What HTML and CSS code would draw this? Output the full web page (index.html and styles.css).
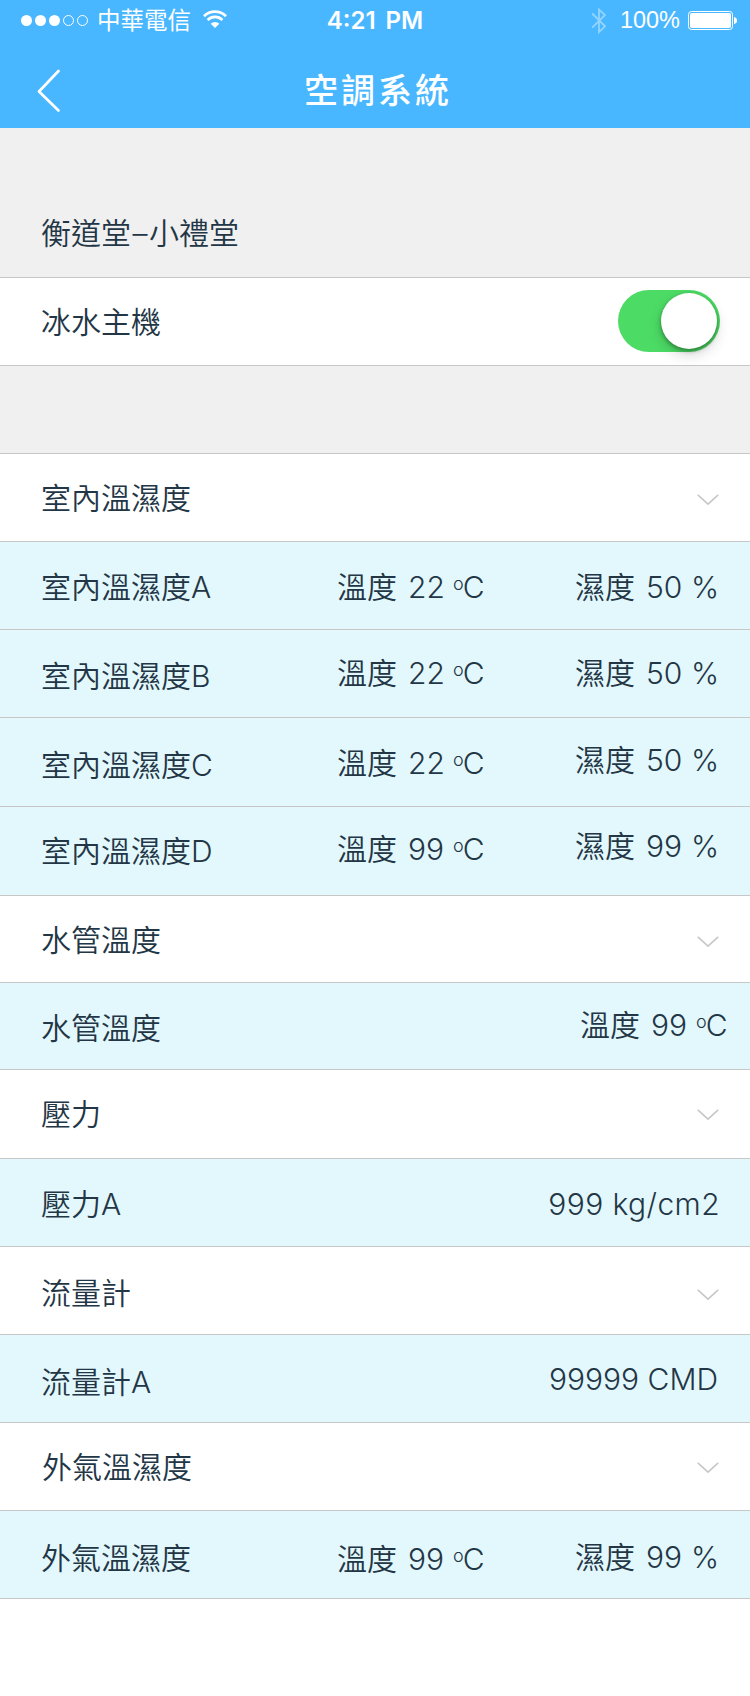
FILE: index.html
```html
<!DOCTYPE html>
<html lang="zh-Hant">
<head>
<meta charset="utf-8">
<title>空調系統</title>
<link rel="stylesheet" href="styles.css">
</head>
<body>
<svg width="0" height="0" class="defs"><symbol id="chev" viewBox="0 0 22 12"><path d="M.8 .8L11 10.2L21.2 .8" fill="none" stroke="#c7c7c7" stroke-width="1.6"/></symbol></svg>
<header class="top">
  <div class="status">
    <div class="carrier">
      <svg width="69" height="13" viewBox="0 0 69 13" fill="#fff"><circle cx="6.5" cy="6.5" r="5.5"/><circle cx="20.5" cy="6.5" r="5.5"/><circle cx="34.5" cy="6.5" r="5.5"/><g fill="none" stroke="#fff"><circle cx="48.5" cy="6.5" r="5"/><circle cx="62.5" cy="6.5" r="5"/></g></svg>
      <span class="carrier-name">中華電信</span>
      <svg class="wifi" width="24" height="19" viewBox="0 0 24 19"><path d="M1 6.2A15.6 15.6 0 0 1 23 6.2M4.6 10A10.5 10.5 0 0 1 19.4 10" fill="none" stroke="#fff" stroke-width="2.7"/><path d="M12 18L7.7 13.7A6.1 6.1 0 0 1 16.3 13.7Z" fill="#fff"/></svg>
    </div>
    <div class="clock">4:21 PM</div>
    <div class="power">
      <svg class="bt" width="16" height="28" viewBox="0 0 16 28"><path d="M1.2 6.5L14 19.3L8 25.2V2.5L14 8L1.2 20.7" fill="none" stroke="#fff" stroke-width="1.8"/></svg>
      <span class="percent">100%</span>
      <svg width="50" height="20" viewBox="0 0 50 20"><rect x=".5" y=".5" width="44" height="18" rx="3" fill="none" stroke="#fff"/><rect x="2" y="2" width="41" height="15" rx="1.8" fill="#fff"/><path d="M46 6Q49 6.5 49 9.5T46 13Z" fill="#fff"/></svg>
    </div>
  </div>
  <nav class="nav">
    <svg class="back" width="24" height="44" viewBox="0 0 24 44"><path d="M21.5 2L2 22.5L21.5 41.5" fill="none" stroke="#fff" stroke-width="2.7" stroke-linecap="round" stroke-linejoin="round"/></svg>
    <h1 class="title">空調系統</h1>
  </nav>
</header>
<main class="list">
  <div class="row place"><span class="label">衡道堂<span class="dash">–</span>小禮堂</span></div>
  <div class="row head"><span class="label">冰水主機</span><span class="switch"><span class="knob"></span></span></div>
  <div class="row gap"></div>
  <div class="row head"><span class="label">室內溫濕度</span><svg class="chev"><use href="#chev"/></svg></div>
  <div class="row data"><span class="label d1">室內溫濕度A</span><span class="temp d1">溫度<span class="n">22</span><i class="o">o</i>C</span><span class="hum d1">濕度<span class="n">50</span><span class="pc">%</span></span></div>
  <div class="row data"><span class="label d2">室內溫濕度B</span><span class="temp u1">溫度<span class="n">22</span><i class="o">o</i>C</span><span class="hum u1">濕度<span class="n">50</span><span class="pc">%</span></span></div>
  <div class="row data tall"><span class="label d3">室內溫濕度C</span><span class="temp d1">溫度<span class="n">22</span><i class="o">o</i>C</span><span class="hum u2">濕度<span class="n">50</span><span class="pc">%</span></span></div>
  <div class="row data tall"><span class="label">室內溫濕度D</span><span class="temp u2">溫度<span class="n">99</span><i class="o">o</i>C</span><span class="hum u5">濕度<span class="n">99</span><span class="pc">%</span></span></div>
  <div class="row head short"><span class="label">水管溫度</span><svg class="chev"><use href="#chev"/></svg></div>
  <div class="row data short"><span class="label d1">水管溫度</span><span class="temp pipe u2">溫度<span class="n">99</span><i class="o">o</i>C</span></div>
  <div class="row head tall"><span class="label">壓力</span><svg class="chev u1"><use href="#chev"/></svg></div>
  <div class="row data"><span class="label d1">壓力A</span><span class="amount pressure d1">999 kg/cm2</span></div>
  <div class="row head"><span class="label d2">流量計</span><svg class="chev d2"><use href="#chev"/></svg></div>
  <div class="row data"><span class="label d3">流量計A</span><span class="amount flow">99999 CMD</span></div>
  <div class="row head"><span class="label outdoor">外氣溫濕度</span><svg class="chev u1"><use href="#chev"/></svg></div>
  <div class="row data"><span class="label d3">外氣溫濕度</span><span class="temp d4">溫度<span class="n">99</span><i class="o">o</i>C</span><span class="hum d2">濕度<span class="n">99</span><span class="pc">%</span></span></div>
</main>
</body>
</html>
```
FILE: styles.css
```css
* { box-sizing: border-box; }
body { margin: 0; background: #fff; color: #233646; font-family: Inter, "Noto Sans CJK TC", sans-serif; }
.defs { display: none; }
svg { display: block; flex: none; }

.top { height: 128px; background: #49b7ff; color: #fff; }
.status { height: 40px; display: grid; grid-template-columns: 1fr auto 1fr; }
.carrier { display: flex; padding: 0 0 0 20px; }
.carrier > svg:first-child { margin-top: 14px; }
.carrier-name { margin: 4px 0 0 8px; font: 400 23.5px/30px "Noto Sans CJK TC", sans-serif; white-space: nowrap; }
.wifi { margin: 10px 0 0 12px; }
.clock { font: 600 24px/42px Inter, sans-serif; word-spacing: 4px; }
.power { display: flex; justify-content: flex-end; padding-right: 12px; }
.bt { margin: 7px 13px 0 0; opacity: .4; }
.percent { font: 400 23.5px/41px "Liberation Sans", sans-serif; margin-right: 8px; }
.power > svg:last-child { margin-top: 11px; }
.nav { height: 88px; display: grid; grid-template-columns: 1fr auto 1fr; }
.back { margin: 29px 0 0 37px; }
.title { margin: 24px 0 0; padding-left: 6px; font: 500 34px/50px "Noto Sans CJK TC", sans-serif; letter-spacing: 3px; }

.row { height: 88px; display: flex; align-items: flex-start; padding: 24px 30px 0 41px; border-bottom: 1px solid #c7c7c7; font-size: 30px; font-weight: 350; line-height: 40px; white-space: nowrap; }
.tall { height: 89px; }
.short { height: 87px; }
.place { height: 150px; padding-top: 85px; background: #f0f0f0; }
.gap { background: #f0f0f0; }
.head { justify-content: space-between; }
.data { display: grid; grid-template-columns: 296px 238px 1fr; background: #e3f8fc; font-weight: 350; }
.outdoor { margin-left: 1px; }
.dash { display: inline-block; width: 18px; text-align: center; }
.temp, .hum { display: flex; }
.pipe { grid-column: 3; margin-left: 5px; }
.amount { grid-column: 2 / 4; justify-self: end; }
.pressure { letter-spacing: .4px; }
.flow { margin-right: 2px; }
.n { width: 34px; margin: 0 11px 0 11px; }
.o { font-style: normal; font-size: 18px; line-height: 34px; margin-right: -1px; }
.chev { width: 22px; height: 12px; margin: 16px 1px 0 0; }
.chev.u1 { margin-top: 15px; }
.chev.d2 { margin-top: 18px; }
.switch { width: 102px; height: 62px; margin-top: -12px; padding: 3px; border-radius: 31px; background: #4cdb65; display: flex; justify-content: flex-end; }
.knob { width: 56px; height: 56px; border-radius: 50%; background: #fff; box-shadow: 0 6px 14px rgba(0,0,0,.16), 0 2px 4px rgba(0,0,0,.35); }

/* vertical nudges of a text within its row */
.u5 { margin-top: -5px; }
.u2 { margin-top: -2px; }
.u1 { margin-top: -1px; }
.d1 { margin-top: 1px; }
.d2 { margin-top: 2px; }
.d3 { margin-top: 3px; }
.d4 { margin-top: 4px; }
```
